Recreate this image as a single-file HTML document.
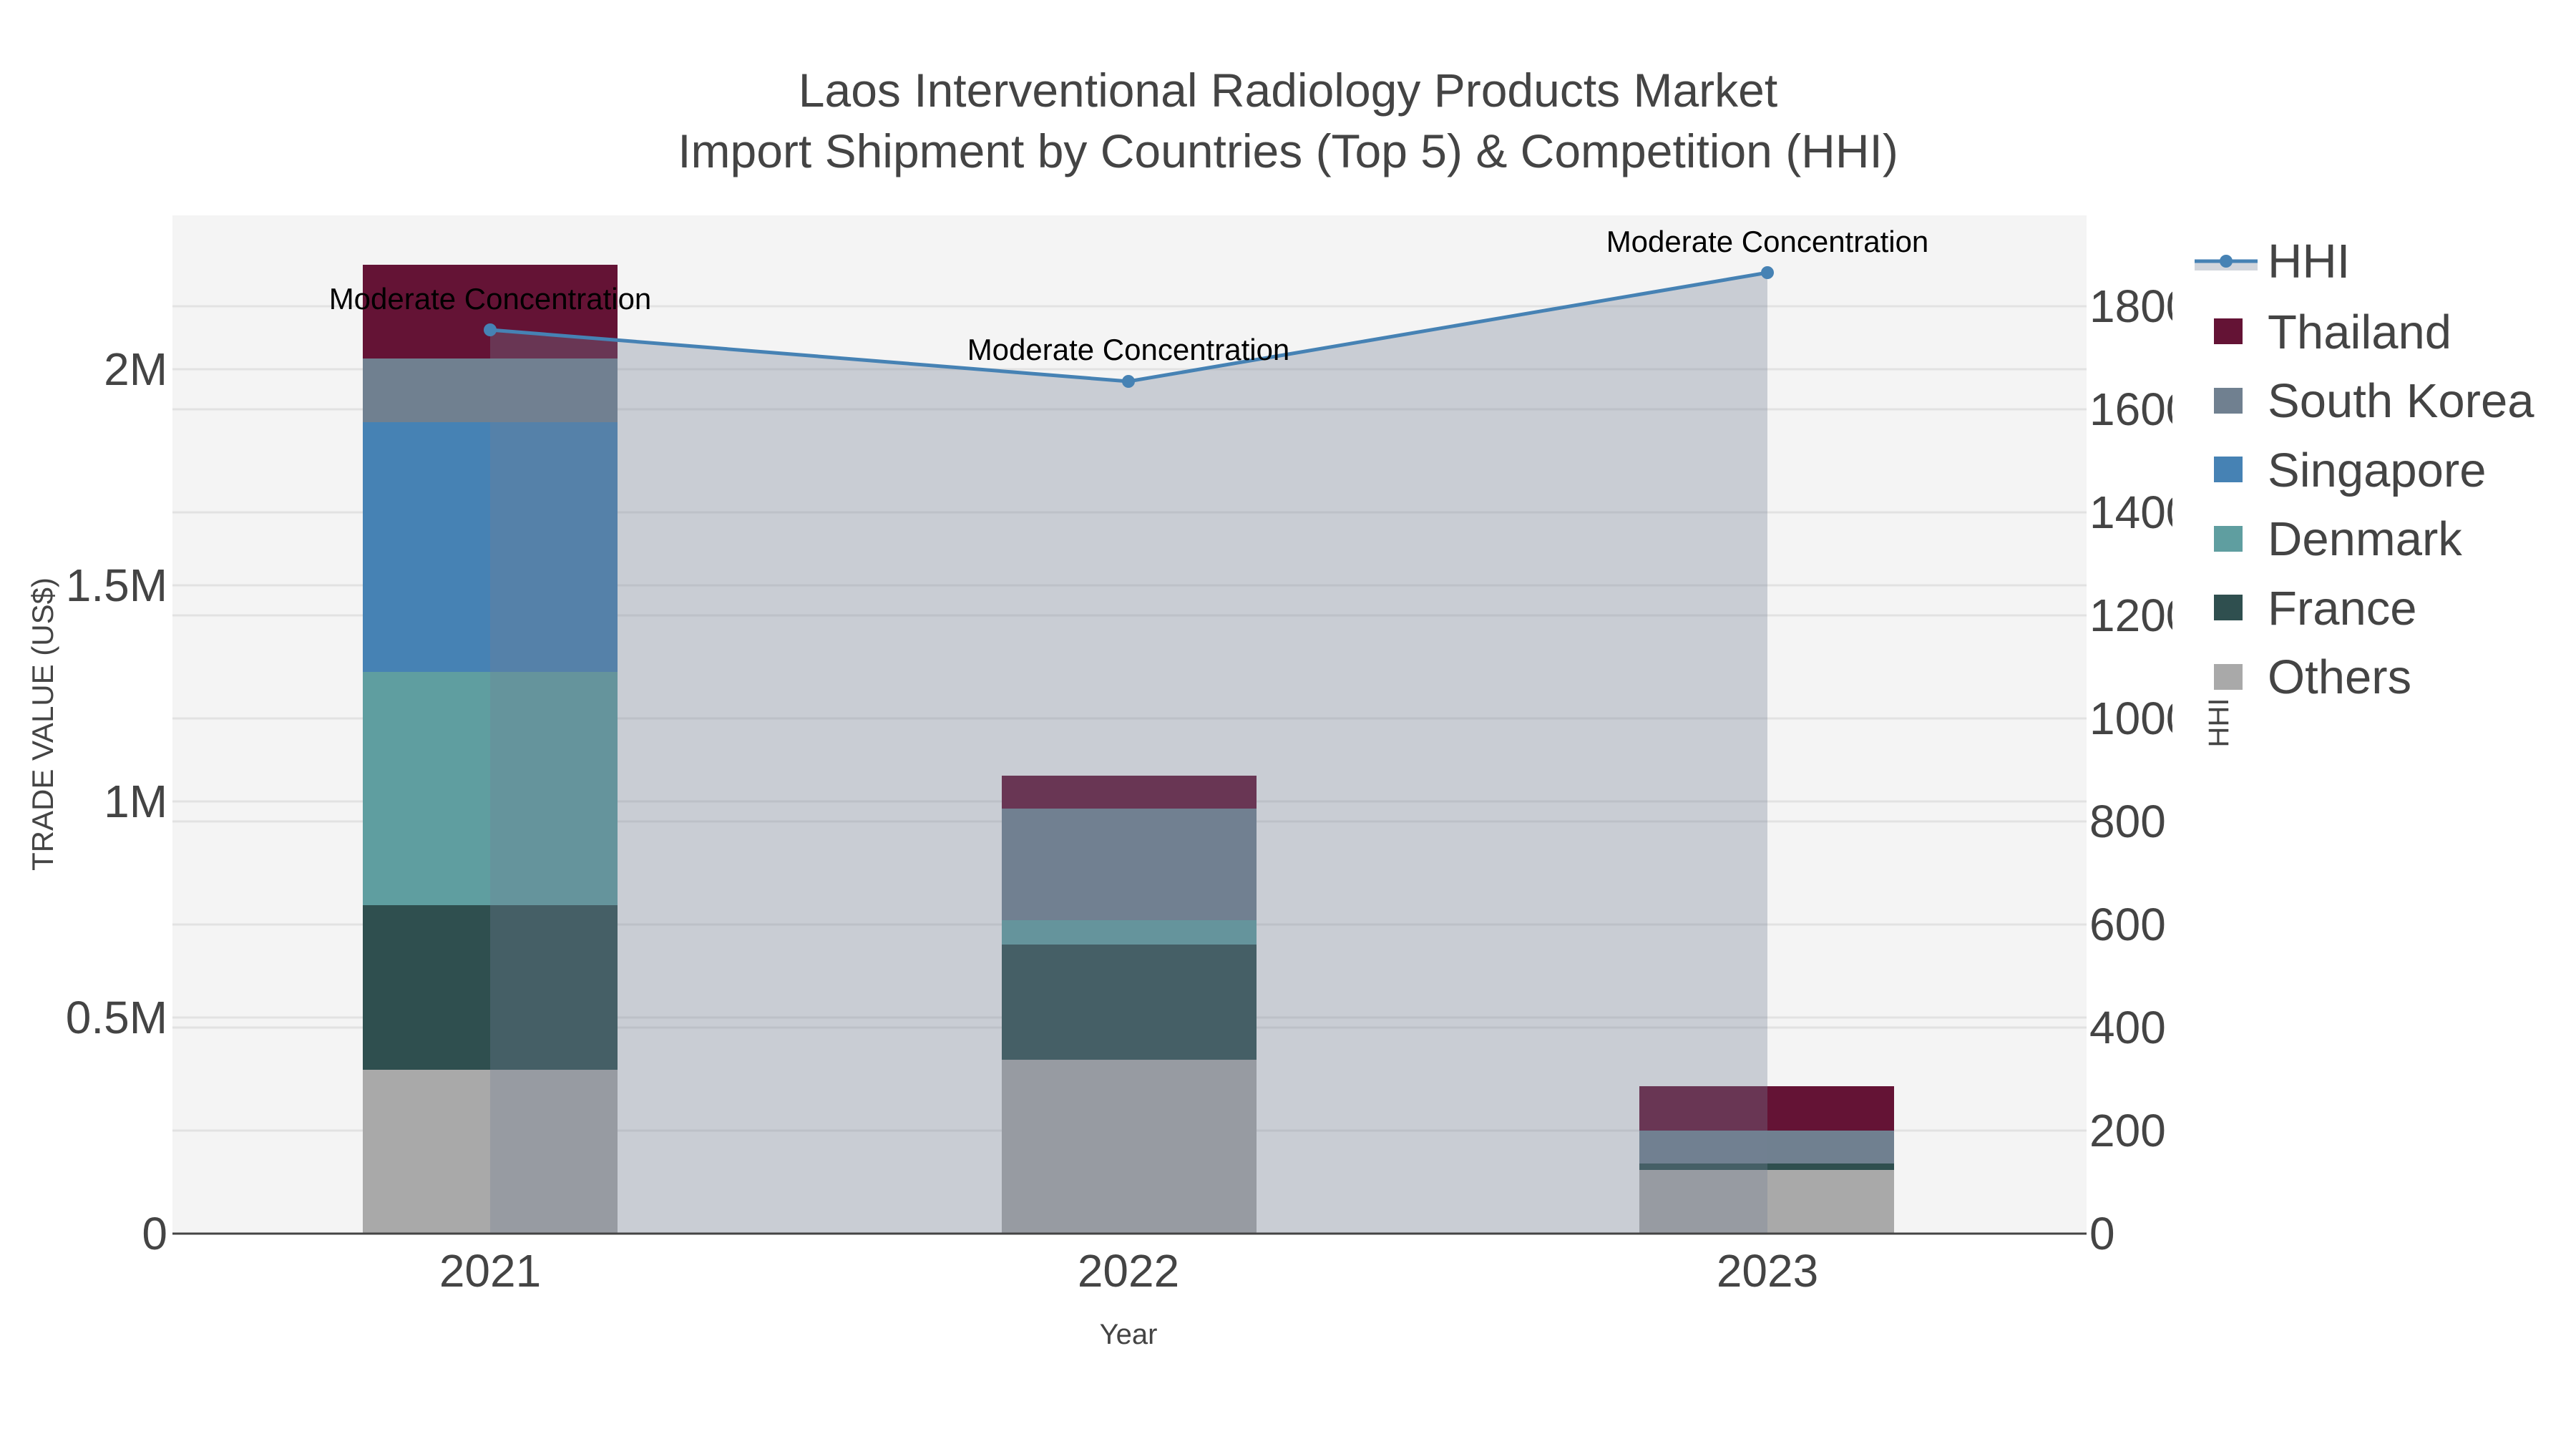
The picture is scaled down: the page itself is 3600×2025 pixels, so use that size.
<!DOCTYPE html>
<html><head><meta charset="utf-8"><style>html,body{margin:0;padding:0;background:#fff}svg{display:block}text{font-family:"Liberation Sans",Arial,sans-serif}</style></head>
<body>
<svg width="3600" height="2025" viewBox="0 0 3600 2025" xmlns="http://www.w3.org/2000/svg">
<rect width="3600" height="2025" fill="#fff"/>
<rect x="241" y="301" width="2675" height="1423" fill="#f4f4f4"/>
<g stroke="#e2e2e2" stroke-width="3">
<line x1="241" x2="2916" y1="1422" y2="1422"/><line x1="241" x2="2916" y1="1120" y2="1120"/><line x1="241" x2="2916" y1="818" y2="818"/><line x1="241" x2="2916" y1="516" y2="516"/>
<line x1="241" x2="2916" y1="1580" y2="1580"/><line x1="241" x2="2916" y1="1436" y2="1436"/><line x1="241" x2="2916" y1="1292" y2="1292"/><line x1="241" x2="2916" y1="1148" y2="1148"/><line x1="241" x2="2916" y1="1004" y2="1004"/><line x1="241" x2="2916" y1="860" y2="860"/><line x1="241" x2="2916" y1="716" y2="716"/><line x1="241" x2="2916" y1="572" y2="572"/><line x1="241" x2="2916" y1="428" y2="428"/>
</g>
<rect x="507" y="1495" width="356" height="229" fill="#a9a9a9"/>
<rect x="507" y="1265" width="356" height="230" fill="#2f4f4f"/>
<rect x="507" y="939" width="356" height="326" fill="#5f9ea0"/>
<rect x="507" y="590" width="356" height="349" fill="#4682b4"/>
<rect x="507" y="501" width="356" height="89" fill="#708090"/>
<rect x="507" y="370" width="356" height="131" fill="#641335"/>
<rect x="1400" y="1481" width="356" height="243" fill="#a9a9a9"/>
<rect x="1400" y="1320" width="356" height="161" fill="#2f4f4f"/>
<rect x="1400" y="1286" width="356" height="34" fill="#5f9ea0"/>
<rect x="1400" y="1130" width="356" height="156" fill="#708090"/>
<rect x="1400" y="1084" width="356" height="46" fill="#641335"/>
<rect x="2291" y="1635" width="356" height="89" fill="#a9a9a9"/>
<rect x="2291" y="1626" width="356" height="9" fill="#2f4f4f"/>
<rect x="2291" y="1580" width="356" height="46" fill="#708090"/>
<rect x="2291" y="1518" width="356" height="62" fill="#641335"/>
<polygon points="685,461 1577,533 2470,381 2470,1724 685,1724" fill="rgb(114,127,148)" fill-opacity="0.33"/>
<line x1="241" x2="2916" y1="1724" y2="1724" stroke="#444" stroke-width="3"/>
<polyline points="685,461 1577,533 2470,381" fill="none" stroke="#4682b4" stroke-width="5"/>
<circle cx="685" cy="461" r="9" fill="#4682b4"/><circle cx="1577" cy="533" r="9" fill="#4682b4"/><circle cx="2470" cy="381" r="9" fill="#4682b4"/>
<g font-size="42" fill="#000" text-anchor="middle">
<text x="685" y="432">Moderate Concentration</text>
<text x="1577" y="503">Moderate Concentration</text>
<text x="2470" y="352">Moderate Concentration</text>
</g>
<g font-size="40" fill="#444" text-anchor="middle">
<text x="1800" y="149" font-size="66">Laos Interventional Radiology Products Market</text>
<text x="1800" y="234" font-size="66">Import Shipment by Countries (Top 5) &amp; Competition (HHI)</text>
<text x="1577" y="1878">Year</text>
<text transform="translate(74,1012) rotate(-90)" font-size="42">TRADE VALUE (US$)</text>
<text transform="translate(3114,1010) rotate(-90)">HHI</text>
</g>
<g font-size="64" fill="#444" text-anchor="end">
<text x="234" y="1746">0</text><text x="234" y="1444">0.5M</text><text x="234" y="1142">1M</text><text x="234" y="840">1.5M</text><text x="234" y="538">2M</text>
</g>
<g font-size="64" fill="#444" text-anchor="middle">
<text x="685" y="1798">2021</text><text x="1577" y="1798">2022</text><text x="2470" y="1798">2023</text>
</g>
<svg x="2916" y="0" width="120" height="2025" overflow="hidden">
<g font-size="64" fill="#444">
<text x="4" y="1746">0</text><text x="4" y="1602">200</text><text x="4" y="1458">400</text><text x="4" y="1314">600</text><text x="4" y="1170">800</text><text x="4" y="1026">1000</text><text x="4" y="882">1200</text><text x="4" y="738">1400</text><text x="4" y="594">1600</text><text x="4" y="450">1800</text>
</g>
</svg>
<rect x="3067" y="365" width="88" height="13" fill="rgb(114,127,148)" fill-opacity="0.33"/>
<line x1="3067" x2="3155" y1="365" y2="365" stroke="#4682b4" stroke-width="5"/>
<circle cx="3111" cy="365" r="9" fill="#4682b4"/>
<rect x="3094" y="445" width="40" height="36" fill="#641335"/>
<rect x="3094" y="542" width="40" height="36" fill="#708090"/>
<rect x="3094" y="638" width="40" height="36" fill="#4682b4"/>
<rect x="3094" y="735" width="40" height="36" fill="#5f9ea0"/>
<rect x="3094" y="831" width="40" height="36" fill="#2f4f4f"/>
<rect x="3094" y="928" width="40" height="36" fill="#a9a9a9"/>
<g font-size="67" fill="#444">
<text x="3169" y="388">HHI</text><text x="3169" y="487">Thailand</text><text x="3169" y="583">South Korea</text><text x="3169" y="680">Singapore</text><text x="3169" y="776">Denmark</text><text x="3169" y="873">France</text><text x="3169" y="969">Others</text>
</g>
</svg>
</body></html>
